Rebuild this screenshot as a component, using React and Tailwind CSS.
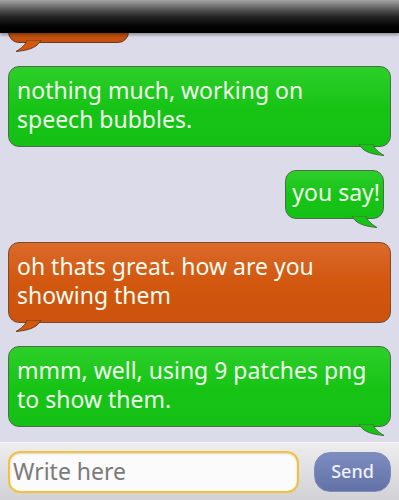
const GREEN = { fill: '#17c416', stroke: '#3f6f3a' };
const ORANGE = { fill: '#d2570f', stroke: '#6e3a1a' };

const Tail = ({ side, color }) => {
  if (side === 'right') {
    return (
      <svg
        className="absolute right-[4px] top-full -mt-[2px]"
        width="28"
        height="13"
        viewBox="0 0 28 13"
      >
        <path
          d="M1 0 C 4 6, 10 10, 26 11.5 C 20 8, 16 4, 15 0 Z"
          fill={color.fill}
          stroke={color.stroke}
          strokeWidth="1"
        />
      </svg>
    );
  }
  return (
    <svg
      className="absolute left-[5px] top-full -mt-[2px]"
      width="28"
      height="13"
      viewBox="0 0 28 13"
    >
      <path
        d="M27 0 C 24 6, 18 10, 2 11.5 C 8 8, 12 4, 13 0 Z"
        fill={color.fill}
        stroke={color.stroke}
        strokeWidth="1"
      />
    </svg>
  );
};

const Bubble = ({ text, mine, short }) => {
  const color = mine ? GREEN : ORANGE;
  const bg = mine
    ? 'bg-gradient-to-b from-[#2ccf29] via-[#17c416] to-[#14c014] border-[#4d6b4b]'
    : 'bg-gradient-to-b from-[#db6a28] via-[#d2570f] to-[#cc530d] border-[#7a4a2c]';
  const pad = short ? 'pl-[6px] pr-[3px] pt-[7px] pb-[11px]' : 'pl-[8px] pr-[14px] pt-[9px] pb-[12px]';
  return (
    <div className={`relative rounded-[11px] border ${bg} ${short ? 'w-fit' : 'min-h-[80px]'}`}>
      <div className={`${pad} text-[23px] leading-[29px] text-[#f2fcef]`}>
        {text}
      </div>
      <Tail side={mine ? 'right' : 'left'} color={color} />
    </div>
  );
};

const App = () => {
  const messages = [
    { text: 'nothing much, working on speech bubbles.', mine: true },
    { text: 'you say!', mine: true, short: true },
    { text: 'oh thats great. how are you showing them', mine: false },
    { text: 'mmm, well, using 9 patches png to show them.', mine: true },
  ];

  return (
    <div
      className="w-[399px] h-[500px] flex flex-col bg-[#dcdbea] overflow-hidden"
      style={{ fontFamily: '"Noto Sans", "Open Sans", sans-serif' }}
    >
      <div className="relative flex-1 overflow-hidden">
        <div className="flex flex-col gap-[23px] px-[8px]">
          {/* previous message, scrolled under the status bar */}
          <div className="relative w-[121px] h-[60px] -mt-[17px] rounded-[11px] border border-[#6e3a1a] bg-[#c4510d]">
            <Tail side="left" color={ORANGE} />
          </div>
          {messages.map((m, i) => (
            <div key={i} className={m.short ? 'flex justify-end pr-[7px]' : ''}>
              <Bubble text={m.text} mine={m.mine} short={m.short} />
            </div>
          ))}
        </div>
        {/* status bar overlay */}
        <div className="absolute top-0 left-0 right-0 h-[33px] bg-gradient-to-b from-[#a5a5a5] via-[#262626] to-black shadow-[0_2px_3px_rgba(0,0,0,0.35)]" />
      </div>

      <div className="h-[58px] flex items-center gap-[15px] px-[8px] bg-gradient-to-b from-[#ededf0] to-[#d2d2d6] border-t border-[#f6f6f8]">
        <div className="w-[291px] h-[42px] flex items-center rounded-[12px] border-[2px] border-[#f1c23a] bg-[#fbfbfb] px-[3px] shadow-[inset_0_1px_2px_rgba(0,0,0,0.15)]">
          <span className="text-[23px] text-[#7a7a7a]">Write here</span>
        </div>
        <button className="w-[77px] h-[40px] rounded-[16px] bg-gradient-to-b from-[#7d8dc0] to-[#6272a8] border border-[#7e8bb3] text-[18px] font-medium text-[#f0f2fa]">
          Send
        </button>
      </div>
    </div>
  );
};

export default App;
